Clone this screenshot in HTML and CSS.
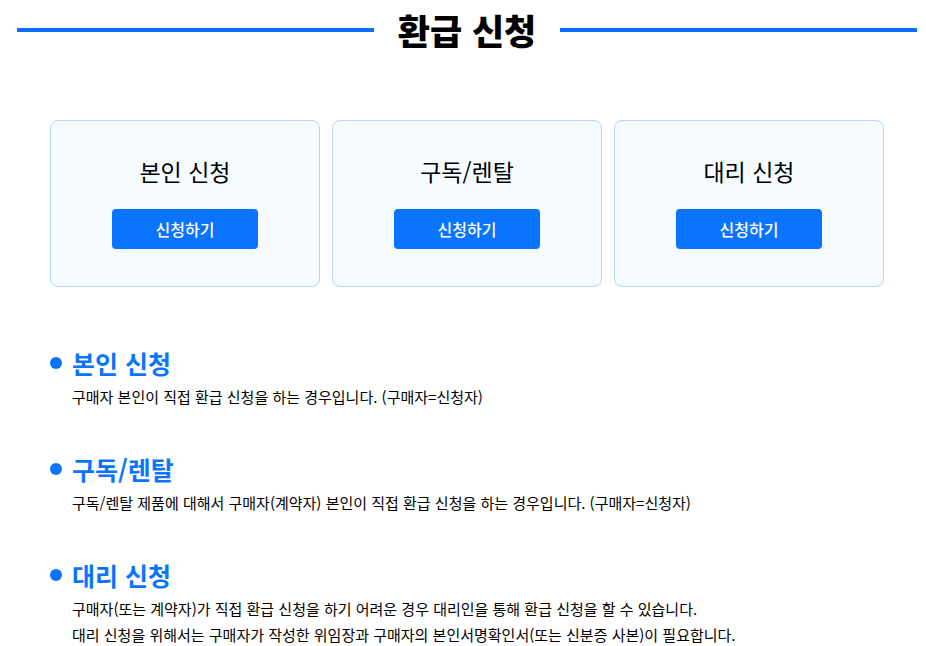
FILE: index.html
```html
<!DOCTYPE html>
<html lang="ko">

<head>
    <meta charset="UTF-8">
    <title>환급 신청</title>
    <link rel="stylesheet" href="styles.css">
</head>

<body>
    <div class="page">
        <h1 class="title-bar"><span>환급 신청</span></h1>

        <div class="cards">
            <div class="card">
                <h3>본인 신청</h3>
                <button type="button">신청하기</button>
            </div>
            <div class="card">
                <h3>구독/렌탈</h3>
                <button type="button">신청하기</button>
            </div>
            <div class="card">
                <h3>대리 신청</h3>
                <button type="button">신청하기</button>
            </div>
        </div>

        <div class="info">
            <div class="info-item">
                <h2>본인 신청</h2>
                <p>구매자 본인이 직접 환급 신청을 하는 경우입니다. (구매자=신청자)</p>
            </div>
            <div class="info-item">
                <h2>구독/렌탈</h2>
                <p>구독/렌탈 제품에 대해서 구매자(계약자) 본인이 직접 환급 신청을 하는 경우입니다. (구매자=신청자)</p>
            </div>
            <div class="info-item">
                <h2>대리 신청</h2>
                <p>구매자(또는 계약자)가 직접 환급 신청을 하기 어려운 경우 대리인을 통해 환급 신청을 할 수 있습니다.<br>
                    대리 신청을 위해서는 구매자가 작성한 위임장과 구매자의 본인서명확인서(또는 신분증 사본)이 필요합니다.</p>
            </div>
        </div>
    </div>
</body>

</html>
```

FILE: styles.css
```css
body {
    margin: 0;
    font-family: 'Noto Sans CJK KR', 'Noto Sans', sans-serif;
    background: #ffffff;
    color: #000000;
}

.page {
    padding: 0 9px 0 17px;
}

.title-bar {
    display: flex;
    align-items: center;
    gap: 24px;
    margin: 0;
    padding-top: 9px;
    font-size: 35px;
    font-weight: 800;
    line-height: 42px;
}

.title-bar::before,
.title-bar::after {
    content: "";
    flex: 1;
    height: 4px;
    margin-top: 0;
    background: #0d6efd;
}

.cards {
    display: flex;
    gap: 12px;
    margin: 69px 0 0 33px;
}

.card {
    width: 270px;
    height: 167px;
    box-sizing: border-box;
    background: #f5fbff;
    border: 1px solid #b6d4fe;
    border-radius: 8px;
    display: flex;
    flex-direction: column;
    align-items: center;
    padding-top: 34px;
}

.card h3 {
    margin: 0;
    font-size: 23px;
    font-weight: 400;
    line-height: 32px;
}

.card button {
    margin-top: 22px;
    width: 146px;
    height: 40px;
    border: none;
    border-radius: 4px;
    background: #0a74ff;
    color: #ffffff;
    font-family: inherit;
    font-size: 16px;
    font-weight: 500;
    cursor: pointer;
}

.info {
    margin: 58px 0 0 33px;
}

.info-item {
    margin-bottom: 41px;
}

.info-item h2 {
    display: flex;
    align-items: center;
    gap: 10px;
    margin: 0;
    font-size: 25px;
    font-weight: 700;
    line-height: 36px;
    color: #0a74ff;
}

.info-item h2::before {
    content: "";
    width: 12px;
    height: 12px;
    border-radius: 50%;
    background: #0a74ff;
}

.info-item p {
    margin: 3px 0 0 22px;
    font-size: 15px;
    line-height: 26px;
}
```
